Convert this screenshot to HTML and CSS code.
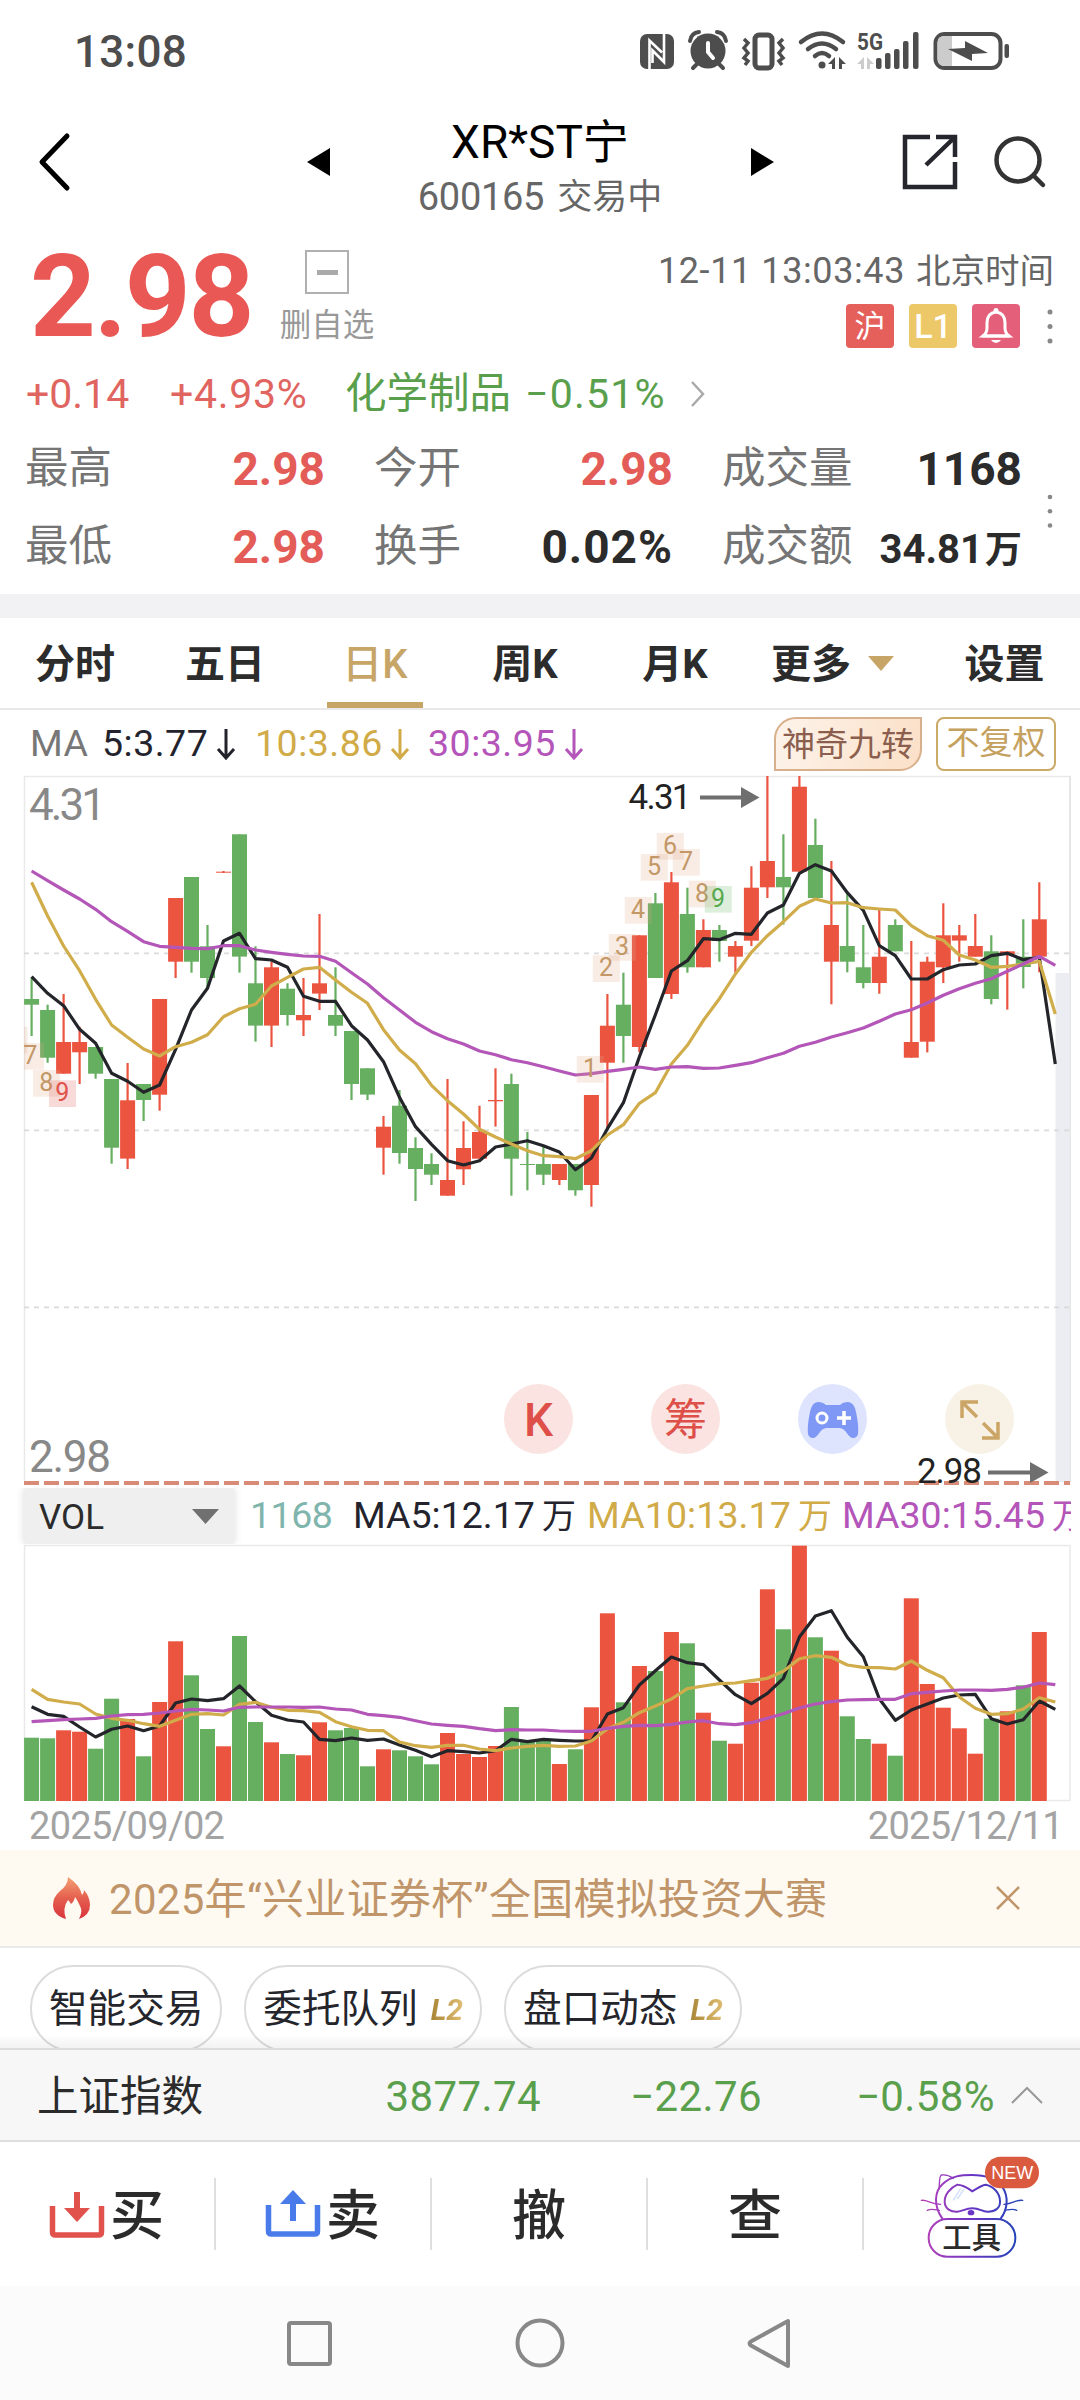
FILE: index.html
```html
<!DOCTYPE html>
<html lang="zh-CN">
<head>
<meta charset="utf-8">
<title>XR*ST宁 600165</title>
<link rel="stylesheet" href="styles.css">
</head>
<body>
<div class="status">
  <span class="clock">13:08</span>
  <svg class="status-icons" viewBox="0 0 400 44" width="400" height="44">
    <g fill="#4d4d4d">
      <rect x="0" y="4" width="34" height="35" rx="7"/>
      <path d="M9.500 40V10.500L22 22.500M24 3.500V32L12.500 20.500V33" fill="none" stroke="#fff" stroke-width="2.600"/>
      <circle cx="68" cy="21" r="17.500"/>
      <path d="M50 11q1-8 9-9M86 11q-1-8-9-9M58 33l-5 5M78 33l5 5" fill="none" stroke="#4d4d4d" stroke-width="4" stroke-linecap="round"/>
      <path d="M68 13v9l5 6" fill="none" stroke="#fff" stroke-width="4" stroke-linecap="round"/>
      <rect x="115" y="5" width="17" height="33" rx="4" fill="none" stroke="#4d4d4d" stroke-width="5"/>
      <path d="M104 9l4 4-4 5 4 5-4 5 4 3-3 4M143 9l-4 4 4 5-4 5 4 5-4 3 3 4" fill="none" stroke="#4d4d4d" stroke-width="3.500"/>
      <path d="M161 12q21-17 42 0M168 19q14-11 28 0M175 26q7-6 14 0" fill="none" stroke="#4d4d4d" stroke-width="4.500" stroke-linecap="round"/>
      <circle cx="182" cy="35" r="3.500"/>
      <path d="M195 27v12h-3v-5h-4zM199 39V27l7 7h-4v5z"/>
      <rect x="236" y="28" width="5.500" height="11" rx="2"/>
      <rect x="245" y="23" width="5.500" height="16" rx="2"/>
      <rect x="254" y="19" width="5.500" height="20" rx="2"/>
      <rect x="263" y="11" width="5.500" height="28" rx="2"/>
      <rect x="273" y="2" width="5.500" height="37" rx="2"/>
    </g>
    <path d="M224 27v12h-3v-5h-4zM227 39V27l7 7h-4v5z" fill="#ccc"/>
    <text x="217" y="20" class="net" textLength="26" lengthAdjust="spacingAndGlyphs">5G</text>
    <rect x="295.500" y="4" width="65" height="34" rx="9" fill="#fff" stroke="#4d4d4d" stroke-width="4"/>
    <path d="M297.500 12q0-6 7-6h7.500v30h-7.500q-7 0-7-7z" fill="#ccc"/>
    <path d="M308 19l17-1v-7l23 12-16 1v7z" fill="#4d4d4d"/>
    <rect x="364.500" y="14" width="4.500" height="14" rx="2" fill="#4d4d4d"/>
  </svg>
</div>

<header class="header">
  <svg class="back" width="34" height="58" viewBox="0 0 34 58"><path d="M29 3L4 29l25 26" fill="none" stroke="#000" stroke-width="5" stroke-linecap="round" stroke-linejoin="round"/></svg>
  <svg class="prev" width="24" height="30" viewBox="0 0 24 30"><path d="M23 1v28L0 15z"/></svg>
  <div class="names">
    <div class="name">XR*ST宁</div>
    <div class="code"><span>600165</span><span class="state">交易中</span></div>
  </div>
  <svg class="next" width="24" height="30" viewBox="0 0 24 30"><path d="M1 1v28l23-14z"/></svg>
  <svg class="share" width="54" height="54" viewBox="0 0 54 54"><path d="M27 2H2v50h50V27M33 2h19v20M51 3L23 30" fill="none" stroke="#26262e" stroke-width="4.500"/></svg>
  <svg class="search" width="54" height="54" viewBox="0 0 54 54"><g fill="none" stroke="#333" stroke-width="4.500"><circle cx="25" cy="25" r="21.500"/><path d="M41 41l9 9" stroke-linecap="round"/></g></svg>
</header>

<section class="quote">
  <div class="quote-top">
    <div class="price">2.98</div>
    <div class="fav"><i class="fav-box"></i><span>删自选</span></div>
    <div class="meta">
      <div class="time"><span class="ts">12-11 13:03:43</span><span class="tz">北京时间</span></div>
      <div class="tags">
        <span class="tag tag-hu">沪</span>
        <span class="tag tag-l1">L1</span>
        <span class="tag tag-bell"><svg width="32" height="38" viewBox="0 0 32 38"><path d="M3 29q4-3 4-8v-5q0-10 9-11 9 1 9 11v5q0 5 4 8z" fill="none" stroke="#fff" stroke-width="3"/><path d="M2 29h28" stroke="#fff" stroke-width="3"/><circle cx="16" cy="3.500" r="2.500" fill="#fff"/><path d="M11 33h10q-2 3-5 3t-5-3z" fill="#fff"/></svg></span>
        <svg class="dots" width="8" height="34" viewBox="0 0 8 34"><g fill="#888"><circle cx="4" cy="3" r="2.500"/><circle cx="4" cy="17.500" r="2.500"/><circle cx="4" cy="32" r="2.500"/></g></svg>
      </div>
    </div>
  </div>
  <div class="change">
    <span class="up diff">+0.14</span>
    <span class="up pct">+4.93%</span>
    <span class="down sector">化学制品</span>
    <span class="down secpct">−0.51%</span>
    <svg width="16" height="28" viewBox="0 0 16 28"><path d="M2 2l11 12L2 26" fill="none" stroke="#aaa" stroke-width="2.500"/></svg>
  </div>
  <div class="stats-row">
    <div class="stats">
      <span class="lab">最高</span><b class="val red">2.98</b>
      <span class="lab in">今开</span><b class="val red">2.98</b>
      <span class="lab in">成交量</span><b class="val">1168</b>
      <span class="lab">最低</span><b class="val red">2.98</b>
      <span class="lab in">换手</span><b class="val wide">0.02%</b>
      <span class="lab in">成交额</span><b class="val small">34.81<span class="wan">万</span></b>
    </div>
    <svg class="dots" width="8" height="34" viewBox="0 0 8 34"><g fill="#888"><circle cx="4" cy="3" r="2.300"/><circle cx="4" cy="17.300" r="2.300"/><circle cx="4" cy="31.500" r="2.300"/></g></svg>
  </div>
</section>

<nav class="tabs">
  <span>分时</span><span>五日</span><span class="active">日K</span><span>周K</span><span>月K</span>
  <span class="more">更多<svg width="26" height="15" viewBox="0 0 26 15"><path d="M0 0h26L13 15z" fill="#c7a567"/></svg></span>
  <span class="setup">设置</span>
</nav>

<div class="ma-row">
  <span class="ma-label">MA</span>
  <span class="ma5">5:3.77</span><svg class="arr ma5" viewBox="0 0 20 32"><path d="M10 1v28M2 21l8 9 8-9"/></svg>
  <span class="ma10">10:3.86</span><svg class="arr ma10" viewBox="0 0 20 32"><path d="M10 1v28M2 21l8 9 8-9"/></svg>
  <span class="ma30">30:3.95</span><svg class="arr ma30" viewBox="0 0 20 32"><path d="M10 1v28M2 21l8 9 8-9"/></svg>
  <span class="nine">神奇九转</span>
  <span class="adjust">不复权</span>
</div>

<div class="kline">
  <svg id="kline" width="1080" height="712" viewBox="0 776 1080 712"></svg>
  <div class="floats">
    <span class="fl fl-red fl-k">K</span>
    <span class="fl fl-red">筹</span>
    <span class="fl fl-blue"><svg width="52" height="40" viewBox="0 0 52 40"><path d="M11 2q5 0 8 3h14q3-3 8-3 6 0 8 10 3 14 2 22-1 4-5 4-3 0-7-6-3-4-7-4H20q-4 0-7 4-4 6-7 6-4 0-5-4-1-8 2-22 2-10 8-10z" fill="#7f98f5"/><circle cx="15" cy="18" r="5" fill="none" stroke="#fff" stroke-width="3"/><path d="M37 11v14M30 18h14" stroke="#fff" stroke-width="3.500"/></svg></span>
    <span class="fl fl-gold"><svg width="44" height="44" viewBox="0 0 44 44"><path d="M4 20V4h16M5 5l14 14M40 24v16H24M39 39L25 25" fill="none" stroke="#cba566" stroke-width="3.500"/></svg></span>
  </div>
</div>

<div class="vol-row">
  <div class="vol-select">VOL<svg width="28" height="16" viewBox="0 0 28 16"><path d="M0 0h27L13.500 15z" fill="#707070"/></svg></div>
  <span class="v1">1168</span>
  <span class="v5">MA5:12.17<i>万</i></span>
  <span class="v10">MA10:13.17<i>万</i></span>
  <span class="v30">MA30:15.45<i>万</i></span>
</div>
<div class="volume"><svg id="volume" width="1080" height="260" viewBox="0 1544 1080 260"></svg></div>
<div class="dates"><span>2025/09/02</span><span>2025/12/11</span></div>

<div class="banner">
  <svg width="40" height="44" viewBox="0 0 40 44"><defs><linearGradient id="fire" x1="0" y1="0" x2="0" y2="1"><stop offset="0" stop-color="#f3a173"/><stop offset=".5" stop-color="#e5604f"/><stop offset="1" stop-color="#d9333c"/></linearGradient></defs><path d="M16 1q12 8 14 18 2-2 2-5 6 7 6 15 0 10-11 14 4-8 1-13-2-5-5-9-1 5-4 7-1-2-3-4-6 8-2 19Q1 39 1 29q0-8 7-14Q16 9 16 1z" fill="url(#fire)"/></svg>
  <span>2025年“兴业证券杯”全国模拟投资大赛</span>
  <svg class="close" width="26" height="26" viewBox="0 0 26 26"><path d="M2 2l22 22M24 2L2 24" fill="none" stroke="#c0956a" stroke-width="2.500"/></svg>
</div>

<div class="pills">
  <span class="pill">智能交易</span>
  <span class="pill">委托队列<em>L2</em></span>
  <span class="pill">盘口动态<em>L2</em></span>
</div>

<div class="index">
  <span class="idx-name">上证指数</span>
  <span class="idx-v">3877.74</span>
  <span class="idx-v">−22.76</span>
  <span class="idx-v">−0.58%</span>
  <svg width="32" height="18" viewBox="0 0 32 18"><path d="M1 17L16 2l15 15" fill="none" stroke="#999" stroke-width="2"/></svg>
</div>

<div class="actions">
  <div class="act act-icon"><svg width="54" height="48" viewBox="0 0 54 48"><path d="M2.500 16v26q0 3 3 3h43q3 0 3-3V16" fill="none" stroke="#e0524b" stroke-width="5.500"/><path d="M27 2v20" stroke="#e0524b" stroke-width="6"/><path d="M14 18l13 14 13-14z" fill="#e0524b"/></svg><span>买</span></div>
  <div class="act act-icon"><svg width="54" height="48" viewBox="0 0 54 48"><path d="M2.500 15v26q0 3 3 3h43q3 0 3-3V15" fill="none" stroke="#4a7bea" stroke-width="5.500"/><path d="M27 31V10" stroke="#4a7bea" stroke-width="6"/><path d="M14 14L27 0l13 14z" fill="#4a7bea"/></svg><span>卖</span></div>
  <div class="act"><span>撤</span></div>
  <div class="act"><span>查</span></div>
  <div class="act act-cat">
    <svg width="124" height="108" viewBox="54 40 372 324">
      <defs><linearGradient id="cat" x1="85" x2="346" y1="0" y2="0" gradientUnits="userSpaceOnUse"><stop offset="0" stop-color="#b03fb8"/><stop offset=".5" stop-color="#6a35c4"/><stop offset="1" stop-color="#2444b8"/></linearGradient></defs>
      <g fill="none" stroke="url(#cat)" stroke-width="6" stroke-linecap="round">
        <path d="M127 237C100 198 103 155 128 133C155 108 185 106 215 106C260 106 290 118 306 140C328 172 322 210 302 237"/>
        <path d="M117 148C119 130 117 110 124 106C135 104 150 109 160 116" stroke-width="4"/>
        <path d="M217 155C203 145 190 135 172 135C150 145 133 165 134 188C136 210 155 217 172 216C190 214 195 206 217 206C240 206 245 216 262 216C285 217 301 205 300 185C300 160 280 140 258 135C245 135 232 147 217 155Z"/>
        <path d="M64 182C85 180 88 192 122 194M82 212C92 206 105 210 118 212M368 182C345 180 342 192 312 194M350 212C340 206 328 210 314 212" stroke-width="4"/>
        <rect x="86" y="238" width="260" height="113" rx="56" fill="#fff"/>
      </g>
      <ellipse cx="213" cy="219" rx="10" ry="8" fill="#6a35c4"/>
      <path d="M160 182l22-36M172 178l20-30" stroke="#d6e2fa" stroke-width="5"/>
      <text x="215" y="325" class="tool">工具</text>
      <rect x="255" y="51" width="162" height="95" rx="47" fill="#da5a40"/>
      <text x="337" y="119" class="new">NEW</text>
    </svg>
  </div>
</div>

<div class="sysnav">
  <svg width="48" height="52" viewBox="0 0 48 52"><rect x="4" y="6" width="41" height="41" rx="2"/></svg>
  <svg width="52" height="52" viewBox="0 0 52 52"><circle cx="26" cy="26" r="22.500"/></svg>
  <svg width="48" height="52" viewBox="0 0 48 52"><path d="M41 4v45L4 28.500q-3-2 0-4z"/></svg>
</div>
<script src="chart.js"></script>
</body>
</html>
```
FILE: styles.css
```css
* { box-sizing: border-box; margin: 0; padding: 0; }
body {
  width: 1080px; height: 2400px; overflow: hidden; background: #fff; color: #2b2b2b;
  font-family: Roboto, "Noto Sans CJK SC", sans-serif; line-height: 1;
}
svg { display: block; flex: none; overflow: visible; }
span, b { white-space: nowrap; }

.status { height: 100px; display: flex; align-items: flex-start; justify-content: space-between; padding: 30px 40px 0 74px; }
.clock { font-size: 44px; font-weight: 500; color: #4d4d4d; letter-spacing: .3px; }
.net { font: 700 24px Roboto, sans-serif; fill: #4d4d4d; }

.header { height: 130px; display: grid; grid-template-columns: 38px 269px 104px 258px 81px 153px 91px 60px; align-items: center; }
.header > * { grid-row: 1; }
.back { grid-column: 2; margin-top: -6px; }
.prev { grid-column: 3; margin-top: -6px; }
.names { grid-column: 3 / 6; width: 300px; margin-left: 83px; text-align: center; }
.name { font-size: 46px; color: #000; letter-spacing: 0; margin-top: 5px; }
.code { display: flex; justify-content: center; align-items: center; gap: 13px; font-size: 38px; letter-spacing: -.3px; color: #666; margin-top: 13px; }
.state { font-size: 35px; letter-spacing: 0; }
.next { grid-column: 5; margin-left: 81px; margin-top: -6px; }
.share { grid-column: 7; margin-top: -6px; }
.search { grid-column: 8; margin-top: -6px; margin-left: -1px; }

.quote { height: 364px; }
.quote-top { height: 130px; display: flex; padding-left: 30px; }
.price { width: 249px; font-size: 115px; font-weight: 700; color: #e95854; letter-spacing: -2.300px; padding-top: 9px; }
.fav { width: 96px; display: flex; flex-direction: column; align-items: center; padding-top: 20px; font-size: 31.500px; color: #999; }
.fav-box { width: 44px; height: 44px; border: 2px solid #b0b0b0; display: flex; align-items: center; justify-content: center; margin-bottom: 16px; }
.fav-box::after { content: ""; width: 21px; height: 5px; background: #aaa; }
.meta { flex: 1; padding-top: 23px; display: flex; flex-direction: column; align-items: flex-end; }
.time { display: flex; align-items: center; gap: 11px; padding-right: 26px; color: #666; height: 36px; }
.ts { font-size: 36px; letter-spacing: .6px; }
.tz { font-size: 34.500px; }
.tags { display: flex; align-items: center; gap: 15px; margin-top: 15px; padding-right: 26px; }
.tag { width: 48px; height: 44px; border-radius: 4px; color: #fff; font-size: 31px; display: flex; align-items: center; justify-content: center; }
.tag-hu { background: #e5605b; }
.tag-l1 { background: #edc868; font-size: 34px; font-weight: 500; }
.tag-bell { background: #e4607a; }
.tags .dots { margin-left: 11px; }

.change { height: 68px; display: grid; grid-template-columns: 144px 175px 180px 165px 16px; padding-left: 26px; align-items: center; font-size: 41px; }
.up { color: #e06560; }
.pct { letter-spacing: .7px; }
.down { color: #5aa04c; }
.sector { font-size: 41.500px; }
.secpct { letter-spacing: 1.200px; }
.stats-row { height: 160px; display: flex; align-items: center; }
.stats { width: 1022px; padding-left: 25px; display: grid; grid-template-columns: 100px 200px 149px 199px 184px 165px; grid-auto-rows: 78px; align-items: center; }
.lab { font-size: 43.500px; color: #757575; }
.in { padding-left: 49px; }
.val { text-align: right; font-size: 46px; font-weight: 700; }
.red { color: #e45c57; }
.wide { letter-spacing: 1px; }
.small { font-size: 40px; padding-top: 5px; }
.wan { font-size: 37px; margin-left: 2px; }
.stats-row .dots { margin-left: 24px; margin-top: 5px; }

.tabs { height: 116px; border-top: 24px solid #f2f2f5; border-bottom: 2px solid #e9e9eb; display: flex; font-size: 40px; font-weight: 700; color: #2c2c2c; }
.tabs span { height: 90px; display: flex; align-items: center; justify-content: center; width: 150px; padding-top: 4px; }
.tabs .active { color: #c7a567; font-weight: 500; position: relative; }
.tabs .active::after { content: ""; position: absolute; bottom: 0; left: 27px; width: 96px; height: 6px; background: #c7a567; }
.tabs .more { width: 165px; }
.tabs .setup { width: 165px; padding-left: 14px; }
.more svg { margin: -4px 0 0 17px; }

.ma-row { height: 66px; display: flex; align-items: center; padding: 1px 0 0 30px; font-size: 37.500px; letter-spacing: .5px; color: #777; }
.ma-row .ma-label { width: 72px; }
.ma-row span.ma5 { width: 114px; }
.ma-row span.ma10 { width: 135px; margin-left: 19px; }
.ma-row span.ma30 { width: 136px; margin-left: 18px; }
.arr { width: 20px; height: 32px; fill: none; stroke: currentColor; stroke-width: 3; }
.ma5 { color: #23232d; }
.ma10 { color: #d0ab48; }
.ma30 { color: #b455b9; }
.nine { margin-left: auto; width: 148px; height: 54px; border: 2px solid #d9b08c; border-radius: 22px 0 22px 0; background: linear-gradient(100deg, #fdf3ea, #fbe0c8); color: #8b5e4d; font-size: 33px; letter-spacing: 0; display: flex; align-items: center; justify-content: center; padding-top: 2px; }
.adjust { margin: 0 24px 0 14px; width: 120px; height: 54px; border: 2px solid #cba969; border-radius: 8px; color: #c5a15f; font-size: 33px; letter-spacing: 0; display: flex; align-items: center; justify-content: center; padding-bottom: 3px; }

.kline { height: 712px; position: relative; }
.floats { position: absolute; left: 504px; top: 608px; display: flex; gap: 78px; }
.fl { width: 69px; height: 70px; border-radius: 50%; display: flex; align-items: center; justify-content: center; font-size: 43px; padding-top: 2px; }
.fl-red { background: #fae3e0; color: #dd4f48; }
.fl-k { font-weight: 500; font-size: 46px; }
.fl-blue { background: #dfe4fe; }
.fl-gold { background: #f8f1e6; }
.gray-val { font: 44px Roboto, sans-serif; fill: #888; }
.mark { font: 35px Roboto, sans-serif; fill: #222; }
.nine-no { font: 25px Roboto, sans-serif; text-anchor: middle; }

.vol-row { height: 56px; width: 1071px; overflow: hidden; display: flex; align-items: center; padding-left: 24px; font-size: 37.500px; }
.vol-select { flex: none; width: 210px; height: 56px; background: #efefef; border-radius: 4px; box-shadow: 0 0 8px rgba(0,0,0,.15); padding: 2px 14px 0 15px; display: flex; align-items: center; justify-content: space-between; font-size: 35px; color: #2b2b2b; }
.vol-row span { flex: none; }
.vol-row i { font-style: normal; font-size: 34px; margin-left: 7px; }
.v1 { color: #80b5ad; margin-left: 16px; width: 103px; letter-spacing: -.5px; }
.v5 { color: #23232d; width: 234px; }
.v10 { color: #d0ab48; width: 255px; letter-spacing: .1px; }
.v30 { color: #b455b9; }
.volume { height: 260px; }
.dates { height: 46px; display: flex; justify-content: space-between; padding: 3px 17px 0 29px; font-size: 38px; letter-spacing: -.7px; color: #a3a3a3; }

.banner { height: 98px; background: #fefaf2; border-bottom: 2px solid #ebebe8; display: flex; align-items: center; padding-left: 52px; font-size: 42px; color: #c0956a; letter-spacing: .3px; }
.banner span { margin-left: 17px; padding-top: 3px; }
.banner .close { margin-left: auto; margin-right: 59px; }
.pills { height: 100px; overflow: hidden; display: flex; align-items: flex-start; gap: 22px; padding: 17px 30px 0; position: relative; }
.pills::after { content: ""; position: absolute; left: 0; right: 0; bottom: 0; height: 14px; background: linear-gradient(rgba(0,0,0,0), rgba(0,0,0,.05)); }
.pill { height: 87px; border: 2px solid #dcdcdc; border-radius: 43px; padding: 1px 17px 0; display: flex; align-items: center; font-size: 38.600px; color: #25252c; }
.pill em { font: italic 700 30px Roboto, sans-serif; margin-left: 13px; background: linear-gradient(90deg, #a98536, #e0bd72); background-clip: text; -webkit-background-clip: text; color: transparent; }

.index { height: 94px; background: #f7f7f7; border-top: 2px solid #dcdcdc; border-bottom: 2px solid #dfdfdf; display: grid; grid-template-columns: 164px 340px 221px 233px 16px 32px; padding: 3px 0 0 37px; align-items: center; font-size: 41.500px; }
.idx-v { font-size: 42px; letter-spacing: .4px; color: #5aa04c; text-align: right; }
.index svg { grid-column: 6; margin-top: -3px; }
.actions { height: 144px; display: grid; grid-template-columns: repeat(5, 216px); align-items: center; }
.act { height: 72px; border-right: 2px solid #dfdfdf; display: flex; align-items: center; justify-content: center; font-size: 54px; font-weight: 500; color: #2b2b2b; }
.act span { margin-top: 6px; }
.act-icon svg { margin-right: 6px; }
.act:last-child { border-right: 0; }
.act-cat { height: 144px; justify-content: flex-start; padding-left: 54px; }
.act-cat svg { margin-top: -14px; }
.tool { font: 500 88px "Noto Sans CJK SC", sans-serif; fill: #2b2b2b; text-anchor: middle; }
.new { font: 54px "Liberation Sans", sans-serif; fill: #fff; text-anchor: middle; }
.sysnav { height: 114px; background: #fbfbfb; display: grid; grid-template-columns: 48px 52px 48px; column-gap: 181px; align-items: center; padding-left: 285px; }
.sysnav svg { fill: none; stroke: #888; stroke-width: 4; stroke-linejoin: round; }
```
FILE: chart.js
```js
// Candles: [colour, high, body top, body bottom, low], in thirds of a pixel below y = 760.
const candles = [
["g",655,717,734,828],["g",734,750,893,908],["r",702,846,941,941],["r",800,846,877,972],["g",861,861,941,956],["g",957,957,1163,1211],["r",909,1021,1196,1227],["g",972,972,1020,1083],["r",717,717,1004,1052],["r",414,414,605,654],["g",351,351,605,638],["g",495,559,654,685],["r",333,335,338,339],["g",223,223,590,638],["g",559,670,797,845],["r",605,622,797,861],["g",670,686,765,797],["r",654,765,781,828],["r",462,670,701,750],["g",622,765,797,828],["g",813,813,972,1020],["g",925,925,1004,1020],["r",1068,1100,1163,1244],["g",990,1037,1179,1211],["g",1132,1164,1227,1323],["g",1180,1212,1244,1275],["r",957,1260,1307,1307],["r",1084,1164,1228,1275],["r",1037,1116,1196,1196],["r",925,1020,1024,1100],["g",941,972,1196,1307],["g",1116,1212,1215,1291],
["g",1160,1212,1244,1275],["r",1212,1212,1260,1275],["g",1212,1212,1291,1307],["r",1005,1005,1275,1340],["r",702,797,908,1110],["g",638,734,828,908],["r",526,526,861,877],["g",399,430,654,654],["r",336,367,702,717],["g",383,462,622,638],["r",478,510,622,622],["g",495,510,543,605],["r",543,558,590,638],["r",319,383,542,558],["r",48,303,382,414],["g",223,351,382,494],["r",48,80,335,335],["g",176,255,414,414],["r",303,495,605,733],["g",399,558,605,637],["g",495,622,669,685],["r",450,590,669,701],["g",478,495,574,574],["r",543,846,893,893],["r",590,605,845,877],["r",430,526,622,669],["r",495,526,542,605],["r",462,558,590,590],["g",526,574,717,733],["r",574,574,583,749],["g",478,590,621,685],["r",367,478,590,637]];
const ma5 = [650,700,737,808,850,940,964,997,975,868,750,685,543,520,596,600,622,709,724,724,797,840,905,1012,1100,1153,1202,1215,1202,1161,1152,1142,1157,1176,1229,1194,1106,1028,890,764,633,602,536,539,520,523,459,435,340,314,333,398,451,557,587,657,657,629,615,612,587,580,599,592,912];
const ma10 = [367,468,558,632,718,795,832,867,888,860,847,824,770,746,733,678,652,627,622,660,697,730,809,870,911,976,1022,1062,1108,1131,1152,1172,1187,1190,1196,1172,1125,1094,1030,998,912,856,781,716,642,577,527,485,439,417,429,428,443,447,450,497,527,541,585,600,622,619,612,604,762];
const ma30 = [333,362,390,417,448,485,514,545,559,562,565,566,557,557,570,577,583,588,589,604,638,672,713,750,787,815,836,852,873,884,899,908,920,933,945,941,934,928,921,928,921,920,925,924,916,908,893,880,859,847,831,818,804,784,762,749,729,706,686,670,656,634,612,589,616];
const vol = [713,715,691,695,746,596,657,769,606,424,526,687,739,408,666,727,762,766,667,691,684,799,748,751,769,793,699,762,771,738,621,723,723,792,748,622,340,607,498,513,396,430,638,722,731,548,268,388,137,412,452,649,717,731,767,295,552,623,685,761,656,634,556,396];
const v5 = [620,643,649,681,711,688,678,692,678,609,597,602,596,558,605,646,660,666,718,722,714,721,717,735,751,770,752,755,759,752,718,725,718,721,723,723,642,623,555,512,471,488,494,540,584,611,580,535,411,348,332,412,470,596,661,630,612,594,585,583,656,672,659,603,628];
const v10 = [568,598,606,612,642,655,661,671,679,661,643,641,645,613,607,622,631,632,637,665,680,691,692,726,737,742,736,736,747,752,744,739,736,739,738,723,686,667,638,618,597,566,558,551,549,542,535,514,476,467,472,495,502,503,507,483,511,533,591,625,643,641,627,593,606];
const v30 = [665,662,659,657,655,648,644,643,639,633,628,630,633,622,621,621,621,622,621,627,630,643,647,652,662,672,676,679,686,692,689,690,690,693,694,694,685,679,676,677,673,666,662,671,674,668,655,641,624,612,605,600,599,598,598,581,577,573,570,570,571,568,562,549,554];

const fill = { r: "#eb5540", g: "#66ae60" };
const cx = i => 31.6 + i * 15.995;
const py = v => 760 + v / 3;
const vy = v => 1500 + v / 3;
const rect = (x, y, w, h, f) => `<rect x="${x.toFixed(1)}" y="${y.toFixed(1)}" width="${w}" height="${h.toFixed(1)}" fill="${f}"/>`;
const line = (data, y, c) => `<polyline fill="none" stroke="${c}" stroke-width="3.2" stroke-linejoin="round" points="${data.map((v, i) => cx(i).toFixed(1) + "," + y(v).toFixed(1)).join(" ")}"/>`;
const lines = (a, b, c, y) => line(a, y, "#23252a") + line(b, y, "#d0ac4a") + line(c, y, "#b356b8");

let k = `<path d="M24.500 1482V776.500H1070" fill="none" stroke="#e9e9e9" stroke-width="1.500"/><path d="M1070 776v706" stroke="#e6e6e6" stroke-width="2"/>`;
k += rect(1055.5, 973, 14, 509, "#ecedf2");
for (const y of [953.3, 1130.3, 1307.3]) k += `<path d="M24 ${y}H1070" stroke="#dadada" stroke-width="1.800" stroke-dasharray="5 5"/>`;
candles.forEach(([c, h, t, b, l], i) => {
  k += rect(cx(i) - 1.1, py(h), 2.2, (l - h) / 3, fill[c]);
  k += rect(cx(i) - 7.5, py(t), 15, (b - t) / 3, fill[c]);
});
k += lines(ma5, ma10, ma30, py);

// Nine-turn counters: [digit, candle index, box top, colour]
const gold = "#c39766";
k += rect(24, py(800), 3.5, 26.7, "rgba(222,170,135,.22)");
[["7",0,849,gold],["8",1,930,gold],["9",2,961,"#e0524b"],["1",35,888,gold],["2",36,586,gold],["3",37,522,gold],["4",38,411,gold],["5",39,282,gold],["6",40,219,gold],["7",41,267,gold],["8",42,362,gold],["9",43,378,"#57a84f"]].forEach(([d, i, t, c]) => {
  const bg = c === gold ? "rgba(222,170,135,.22)" : d === "9" && i < 10 ? "rgba(224,90,80,.22)" : "rgba(100,180,95,.22)";
  const x = Math.max(24, cx(i) - 14.6);
  k += rect(x, py(t), (cx(i) + 12.4 - x).toFixed(1), 26.7, bg);
  k += `<text class="nine-no" x="${cx(i) - 1.3}" y="${py(t) + 21}" fill="${c}">${d}</text>`;
});
k += `<path d="M24 1483H1070" stroke="#d98b77" stroke-width="4" stroke-dasharray="15 5"/>`;
k += `<text class="gray-val" x="29" y="820" textLength="77">4.31</text><text class="gray-val" x="29" y="1472" textLength="82">2.98</text>`;
k += `<text class="mark" x="628.500" y="809" textLength="63">4.31</text><text class="mark" x="917" y="1483" textLength="65">2.98</text>`;
k += `<g fill="#6f6f6f"><path d="M700 795.500h41v-8.500l18.500 10.500-18.500 10.500v-8.500h-41z"/><path d="M988 1470.500h42v-8.500l18.500 10.500-18.500 10.500v-8.500h-42z"/></g>`;
document.getElementById("kline").innerHTML = k;

let v = `<path d="M24.500 1801V1545.500H1070V1800.500H1048" fill="none" stroke="#e9e9e9" stroke-width="1.500"/>`;
vol.forEach((t, i) => { v += rect(cx(i) - 7.5, vy(t), 15, (903 - t) / 3, fill[candles[i][0]]); });
v += lines(v5, v10, v30, vy);
document.getElementById("volume").innerHTML = v;
```
